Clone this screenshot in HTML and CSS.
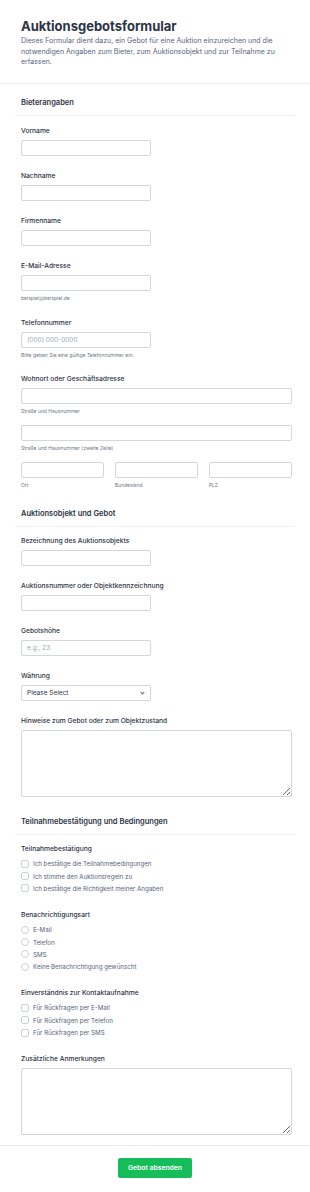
FILE: index.html
```html
<!DOCTYPE html>
<html lang="de">
<head>
  <meta charset="UTF-8">
  <meta name="viewport" content="width=device-width, initial-scale=1.0">
  <title>Auktionsgebotsformular</title>
  <link rel="stylesheet" href="styles.css">
</head>
<body>
  <form class="form" id="gebotForm">
    <div class="form-header">
      <h1>Auktionsgebotsformular</h1>
      <p>Dieses Formular dient dazu, ein Gebot für eine Auktion einzureichen und die notwendigen Angaben zum Bieter, zum Auktionsobjekt und zur Teilnahme zu erfassen.</p>
    </div>

    <section class="section first">
      <h2>Bieterangaben</h2>
      <div class="fields">
        <div class="field">
          <label for="vorname">Vorname</label>
          <input type="text" id="vorname" class="short">
        </div>
        <div class="field">
          <label for="nachname">Nachname</label>
          <input type="text" id="nachname" class="short">
        </div>
        <div class="field">
          <label for="firma">Firmenname</label>
          <input type="text" id="firma" class="short">
        </div>
        <div class="field">
          <label for="email">E-Mail-Adresse</label>
          <input type="email" id="email" class="short">
          <span class="sublabel">beispiel@beispiel.de</span>
        </div>
        <div class="field">
          <label for="telefon">Telefonnummer</label>
          <input type="tel" id="telefon" class="short" placeholder="(000) 000-0000">
          <span class="sublabel">Bitte geben Sie eine gültige Telefonnummer ein.</span>
        </div>
        <div class="field">
          <label for="strasse">Wohnort oder Geschäftsadresse</label>
          <input type="text" id="strasse">
          <span class="sublabel">Straße und Hausnummer</span>
          <input type="text" id="strasse2" class="next">
          <span class="sublabel">Straße und Hausnummer (zweite Zeile)</span>
          <div class="address-row">
            <div>
              <input type="text" id="ort">
              <span class="sublabel">Ort</span>
            </div>
            <div>
              <input type="text" id="bundesland">
              <span class="sublabel">Bundesland</span>
            </div>
            <div>
              <input type="text" id="plz">
              <span class="sublabel">PLZ</span>
            </div>
          </div>
        </div>
      </div>
    </section>

    <section class="section">
      <h2>Auktionsobjekt und Gebot</h2>
      <div class="fields">
        <div class="field">
          <label for="objekt">Bezeichnung des Auktionsobjekts</label>
          <input type="text" id="objekt" class="short">
        </div>
        <div class="field">
          <label for="nummer">Auktionsnummer oder Objektkennzeichnung</label>
          <input type="text" id="nummer" class="short">
        </div>
        <div class="field">
          <label for="gebot">Gebotshöhe</label>
          <input type="number" id="gebot" class="short" placeholder="e.g., 23">
        </div>
        <div class="field">
          <label for="waehrung">Währung</label>
          <div class="select-wrap">
            <select id="waehrung">
              <option value="">Please Select</option>
              <option value="eur">EUR</option>
              <option value="chf">CHF</option>
              <option value="usd">USD</option>
            </select>
          </div>
        </div>
        <div class="field">
          <label for="hinweise">Hinweise zum Gebot oder zum Objektzustand</label>
          <textarea id="hinweise"></textarea>
        </div>
      </div>
    </section>

    <section class="section">
      <h2>Teilnahmebestätigung und Bedingungen</h2>
      <div class="fields">
        <div class="field">
          <label>Teilnahmebestätigung</label>
          <div class="options">
            <label class="option"><input type="checkbox"><span>Ich bestätige die Teilnahmebedingungen</span></label>
            <label class="option"><input type="checkbox"><span>Ich stimme den Auktionsregeln zu</span></label>
            <label class="option"><input type="checkbox"><span>Ich bestätige die Richtigkeit meiner Angaben</span></label>
          </div>
        </div>
        <div class="field">
          <label>Benachrichtigungsart</label>
          <div class="options">
            <label class="option"><input type="radio" name="art"><span>E-Mail</span></label>
            <label class="option"><input type="radio" name="art"><span>Telefon</span></label>
            <label class="option"><input type="radio" name="art"><span>SMS</span></label>
            <label class="option"><input type="radio" name="art"><span>Keine Benachrichtigung gewünscht</span></label>
          </div>
        </div>
        <div class="field">
          <label>Einverständnis zur Kontaktaufnahme</label>
          <div class="options">
            <label class="option"><input type="checkbox"><span>Für Rückfragen per E-Mail</span></label>
            <label class="option"><input type="checkbox"><span>Für Rückfragen per Telefon</span></label>
            <label class="option"><input type="checkbox"><span>Für Rückfragen per SMS</span></label>
          </div>
        </div>
        <div class="field">
          <label for="anmerkungen">Zusätzliche Anmerkungen</label>
          <textarea id="anmerkungen"></textarea>
        </div>
      </div>
    </section>

    <div class="form-footer">
      <button type="button">Gebot absenden</button>
    </div>
  </form>
</body>
</html>
```

FILE: styles.css
```css
body {
  font-family: Inter, 'Noto Sans', sans-serif;
  background-color: #fff;
  margin: 0;
  color: #2c3345;
}

.form-header {
  padding: 18px 21px 15px;
  border-bottom: 1px solid #ebecf0;
}

h1 {
  margin: 0;
  font-size: 13px;
  line-height: 16px;
  font-weight: 700;
  color: #2c3345;
}

.form-header p {
  margin: 2px 0 0;
  font-size: 7px;
  line-height: 10.5px;
  color: #57647e;
}

.section {
  padding: 0 15px;
  margin-top: 20px;
}

.section.first {
  margin-top: 14px;
}

h2 {
  margin: 0;
  padding: 0 6px 7px;
  font-size: 7.5px;
  line-height: 10px;
  font-weight: 600;
  color: #2c3345;
  border-bottom: 1px solid #f1f2f5;
}

.fields {
  display: flex;
  flex-direction: column;
  gap: 15px;
  padding: 9px 3px 0 6px;
}

.section.first .fields {
  gap: 15.25px;
  padding-top: 10px;
}

.field {
  min-width: 0;
}

.field > label {
  display: block;
  font-size: 6.7px;
  line-height: 10px;
  font-weight: 500;
  margin-bottom: 4px;
  color: #2c3345;
}

input[type="text"], input[type="email"], input[type="tel"], input[type="number"], select, textarea {
  display: block;
  width: 100%;
  min-width: 0;
  height: 16px;
  margin: 0;
  padding: 0 5px;
  border: 1px solid #d3d6de;
  border-radius: 2px;
  background: #fff;
  font-family: inherit;
  font-size: 6.5px;
  color: #2c3345;
  box-sizing: border-box;
  outline: none;
}

input.short, .select-wrap {
  width: 130px;
}

input::placeholder {
  color: #a0a6b3;
}

input.next {
  margin-top: 10px;
}

.sublabel {
  display: block;
  margin-top: 4px;
  font-size: 5px;
  line-height: 7px;
  color: #6f7789;
}

.address-row {
  display: grid;
  grid-template-columns: repeat(3, minmax(0, 1fr));
  gap: 10.5px;
  margin-top: 10px;
}

.select-wrap {
  position: relative;
}

select {
  appearance: none;
  -webkit-appearance: none;
  color: #2c3345;
}

.select-wrap::after {
  content: "";
  position: absolute;
  right: 7px;
  top: 6px;
  width: 2px;
  height: 2px;
  border-right: 1px solid #57647e;
  border-bottom: 1px solid #57647e;
  transform: rotate(45deg);
}

textarea {
  height: 67px;
  resize: vertical;
}

.options {
  margin-top: 3px;
}

.option {
  display: flex;
  align-items: center;
  height: 12.3px;
  font-size: 6.2px;
  color: #57647e;
}

.option input {
  appearance: none;
  -webkit-appearance: none;
  width: 8px;
  height: 8px;
  margin: 0 4px 0 0;
  border: 1px solid #ccd0d9;
  border-radius: 2px;
  background: #fff;
  box-sizing: border-box;
  flex-shrink: 0;
}

.option input[type="radio"] {
  border-radius: 50%;
}

.form-footer {
  margin-top: 10px;
  border-top: 1px solid #ebecf0;
  padding: 12px 0 16px;
  display: flex;
  justify-content: center;
}

button {
  width: 74px;
  height: 20px;
  padding: 0;
  border: none;
  border-radius: 2px;
  background-color: #18bd5b;
  color: #fff;
  font-family: inherit;
  font-size: 6.8px;
  font-weight: 600;
  cursor: pointer;
}
```
